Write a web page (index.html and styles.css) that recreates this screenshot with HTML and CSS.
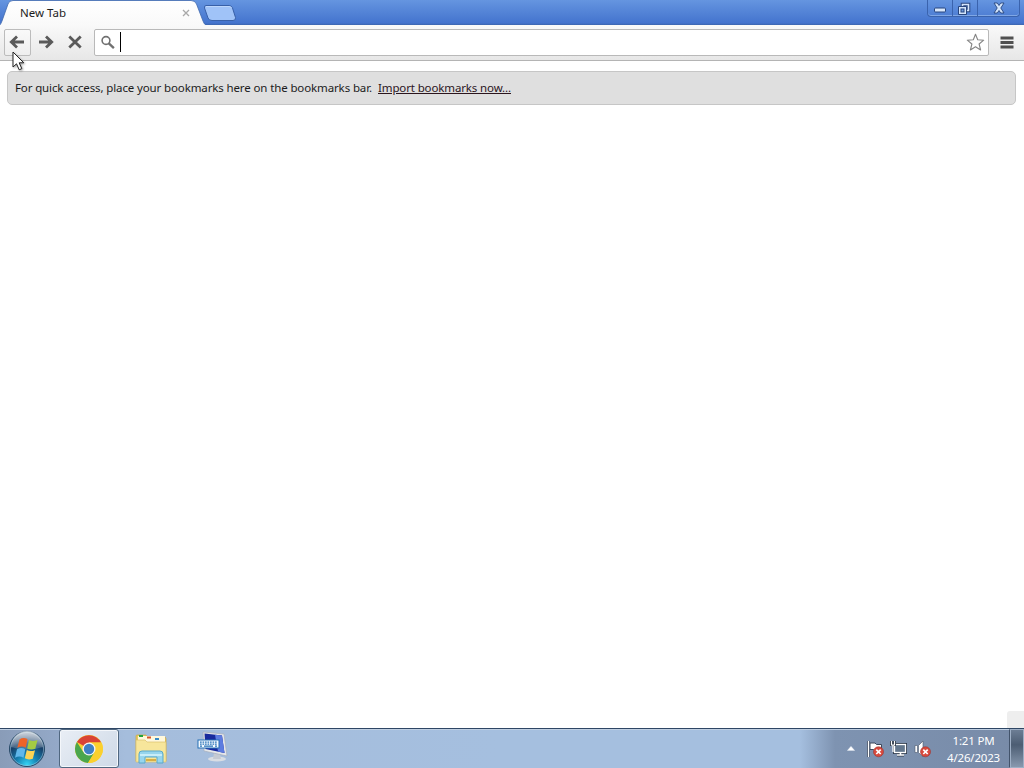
FILE: index.html
```html
<!DOCTYPE html>
<html lang="en">
<head>
    <meta charset="UTF-8">
    <meta name="viewport" content="width=device-width, initial-scale=1.0">
    <title>New Tab</title>
    <link rel="stylesheet" href="styles.css">
</head>
<body>
    <header class="titlebar">
        <div class="tab">
            <svg class="tab-shape" width="208" height="25" viewBox="0 0 208 25">
                <defs>
                    <linearGradient id="tabFill" x1="0" y1="0" x2="0" y2="1">
                        <stop offset="0" stop-color="#fff"/>
                        <stop offset="1" stop-color="#f9f9f9"/>
                    </linearGradient>
                </defs>
                <path d="M0 26 Q2 24 3 21 L9 4 Q10 .5 14 .5 H192 Q196 .5 197.500 4 L204 21 Q205 24.500 208 26 Z" fill="url(#tabFill)" stroke="#3f68ad" stroke-width=".8"/>
            </svg>
            <span class="tab-title">New Tab</span>
            <svg class="tab-close" width="8" height="8" viewBox="0 0 8 8"><path d="M1 1L7 7M7 1L1 7" stroke="#a9a9a9" stroke-width="1.300"/></svg>
        </div>
        <svg class="new-tab" width="34" height="17" viewBox="0 0 34 17">
            <path d="M3 .5 H26 Q28.500 .5 29.500 3 L32.500 12.500 Q33 15.500 30 15.500 H9 Q6 15.500 5 13 L1.500 3 Q1 .5 3 .5 Z" fill="#a0c3f8" stroke="#3860a8"/>
            <path d="M3 1.500 H26 Q28 1.500 28.500 3" fill="none" stroke="#bdd6fb"/>
        </svg>
        <div class="window-buttons">
            <button class="win-btn minimize" aria-label="Minimize">
                <svg width="12" height="6" viewBox="0 0 12 6"><rect x=".5" y="1" width="11" height="4" rx="1" fill="#d9e8fb" stroke="#27457e"/></svg>
            </button>
            <button class="win-btn restore" aria-label="Restore">
                <svg width="14" height="14" viewBox="0 0 14 14">
                    <path d="M5.500 2.500H11.500V8.500H5.500Z" fill="none" stroke="#27457e" stroke-width="3.600"/>
                    <path d="M5.500 2.500H11.500V8.500H5.500Z" fill="none" stroke="#d3e4fa" stroke-width="1.600"/>
                    <path d="M1.500 4.500H9.500V12.500H1.500Z" fill="#d3e4fa" stroke="#27457e"/>
                    <rect x="4" y="7" width="3" height="3" fill="#6f9ade" stroke="#27457e"/>
                </svg>
            </button>
            <button class="win-btn close" aria-label="Close">
                <svg width="12" height="12" viewBox="0 0 12 12">
                    <path d="M1 1H4.300L6 3.500 7.700 1H11L7.800 6 11 11H7.700L6 8.500 4.300 11H1L4.200 6Z" fill="#d3e4fa" stroke="#27457e" stroke-width=".9"/>
                </svg>
            </button>
        </div>
    </header>

    <nav class="toolbar">
        <button class="tool-btn back" aria-label="Back">
            <svg width="16" height="14" viewBox="0 0 16 14"><path d="M15 7H2.500M8 1.500L2.300 7L8 12.500" fill="none" stroke="#5a5a5a" stroke-width="2.800"/></svg>
        </button>
        <button class="tool-btn" aria-label="Forward">
            <svg width="16" height="14" viewBox="0 0 16 14"><path d="M1 7H13.500M8 1.500L13.700 7L8 12.500" fill="none" stroke="#5a5a5a" stroke-width="2.800"/></svg>
        </button>
        <button class="tool-btn" aria-label="Stop">
            <svg width="14" height="14" viewBox="0 0 14 14"><path d="M1.300 1.500L12.700 12.500M12.700 1.500L1.300 12.500" stroke="#5a5a5a" stroke-width="2.800"/></svg>
        </button>
        <div class="omnibox">
            <svg width="14" height="14" viewBox="0 0 14 14">
                <circle cx="5" cy="5.500" r="3.900" fill="none" stroke="#707070" stroke-width="1.600"/>
                <path d="M7.800 8.300L12.900 13.200" stroke="#707070" stroke-width="2.300"/>
            </svg>
            <span class="caret"></span>
            <svg class="star" width="19" height="19" viewBox="0 0 19 19">
                <path d="M9.500 1.200L11.700 6.800 17.700 7.200 13.100 11 14.600 17 9.500 13.800 4.400 17 5.900 11 1.300 7.200 7.300 6.800Z" fill="#fff" stroke="#858585" stroke-width="1.100" stroke-linejoin="round"/>
            </svg>
        </div>
        <button class="menu-btn" aria-label="Menu">
            <svg width="14" height="13" viewBox="0 0 14 13"><path d="M.5 2H13.500M.5 6.500H13.500M.5 11H13.500" stroke="#505050" stroke-width="2.800"/></svg>
        </button>
    </nav>

    <main class="page">
        <div class="bookmark-bar">
            <span class="hint">For quick access, place your bookmarks here on the bookmarks bar.</span>
            <a class="import" href="#">Import bookmarks now...</a>
        </div>
        <div class="corner"></div>
    </main>

    <footer class="taskbar">
        <div class="start">
            <svg width="38" height="38" viewBox="0 0 38 38">
                <defs>
                    <radialGradient id="orb" cx=".5" cy=".95" r=".9">
                        <stop offset="0" stop-color="#35d5f5"/>
                        <stop offset=".35" stop-color="#157fb0"/>
                        <stop offset=".7" stop-color="#173f68"/>
                        <stop offset="1" stop-color="#71849c"/>
                    </radialGradient>
                    <linearGradient id="shine" x1="0" y1="0" x2="0" y2="1">
                        <stop offset="0" stop-color="#fff" stop-opacity=".65"/>
                        <stop offset="1" stop-color="#fff" stop-opacity=".15"/>
                    </linearGradient>
                </defs>
                <circle cx="19" cy="19" r="17.500" fill="url(#orb)" stroke="#244765"/>
                <circle cx="19" cy="19" r="16.600" fill="none" stroke="#9fc5dc" stroke-width=".7" opacity=".8"/>
                <path d="M3 17A16 16 0 0 1 35 17Q19 22 3 17Z" fill="url(#shine)"/>
                <path d="M11.500 9.500Q15 7 19.500 9L17.800 17.700Q14 15.500 9.300 17.700Z" fill="#ed6428"/>
                <path d="M21 10Q25 12 29.500 10L27.300 18.700Q23 20.500 19.200 18.400Z" fill="#a3cb43"/>
                <path d="M9 19.200Q13.500 17 17.300 19.300L15.500 27.700Q11.500 25.500 7 27.700Z" fill="#60b7ea"/>
                <path d="M18.800 20Q22.500 22 27 20.200L24.800 28.700Q20.500 30.300 16.800 28.300Z" fill="#fcd354"/>
            </svg>
        </div>
        <div class="task active">
            <svg width="30" height="30" viewBox="0 0 30 30">
                <circle cx="15" cy="15" r="14" fill="#fbd02e"/>
                <path d="M15 15L2.900 8A14 14 0 0 1 27.100 8.500H15Z" fill="#d94335"/>
                <path d="M2.900 8A14 14 0 0 0 14 29L20.600 18.300L9.400 18.200Z" fill="#4aa64d"/>
                <path d="M15 8.500H27.100A14 14 0 0 1 14 29L20.600 18.300Z" fill="#fbd02e"/>
                <circle cx="15" cy="15" r="6.500" fill="#f4f4f4"/>
                <circle cx="15" cy="15" r="5.200" fill="#3f80c4"/>
            </svg>
        </div>
        <div class="task">
            <svg width="32" height="30" viewBox="0 0 32 30">
                <path d="M1 4V2Q1 1 2 1H11L12 3H29Q31 3 31 5V27H1Z" fill="#e8c960" stroke="#c9a74c" stroke-width=".7"/>
                <rect x="3" y="2" width="27" height="6" fill="#fff8dc"/>
                <path d="M4 2H8" stroke="#23a33c" stroke-width="2"/>
                <path d="M12 3.500H16" stroke="#d7542d" stroke-width="2"/>
                <path d="M20 5H24" stroke="#398bc6" stroke-width="2"/>
                <path d="M1 6H10L12 8H31V28H1Z" fill="#f7e69b" stroke="#dac06b" stroke-width=".7"/>
                <path d="M4 29V20Q4 17 7 17H25Q28 17 28 20V29H22V23H10V29Z" fill="#97d5ed" stroke="#5aa9cb"/>
                <path d="M5 21H27" stroke="#d9f4fb" stroke-width="1.500"/>
                <path d="M11 26H21" stroke="#d8af45" stroke-width="2"/>
            </svg>
        </div>
        <div class="task">
            <svg width="32" height="36" viewBox="0 0 32 36">
                <ellipse cx="20" cy="28" rx="9" ry="2.500" fill="#d9dde3"/>
                <path d="M17 22L23 23L24 28H16Z" fill="#c5cad3"/>
                <path d="M6 1L27 3L30 25L7 20Z" fill="#e4e6e9" stroke="#a5aebc" stroke-width=".7"/>
                <path d="M7.500 2.500L25 4.500L27.500 22L8.500 18Z" fill="#192a9d"/>
                <path d="M18 3.700L25 4.500L27.500 22L21 20.500Z" fill="#5d7ce0"/>
                <rect x="1" y="9" width="21" height="8" fill="#f4faff" stroke="#2670b5"/>
                <path d="M3 11.200H20M3 13.200H20" stroke="#2873b8" stroke-width="1.200" stroke-dasharray="1.700 .8"/>
                <path d="M3 15.200H5M7 15.200H16M18 15.200H20" stroke="#2873b8" stroke-width="1.200"/>
            </svg>
        </div>
        <div class="tray">
            <svg class="arrow" width="8" height="5" viewBox="0 0 8 5"><path d="M4 .3L7.700 4.500H.3Z" fill="#fff" stroke="#e1e8f3" stroke-width=".4"/></svg>
            <svg class="flag" width="18" height="18" viewBox="0 0 18 18">
                <path d="M1.500 1V17" stroke="#36445a" stroke-width="3"/>
                <path d="M3 3H8L9.500 4.500H14.500V11H8L6.500 9.500H3Z" fill="#fff" stroke="#3c495d"/>
                <path d="M1.500 1V17" stroke="#fff" stroke-width="1.400"/>
                <circle cx="11.500" cy="11.800" r="5" fill="#d84a3e" stroke="#9f302c" stroke-width=".6"/>
                <path d="M9.300 9.600L13.700 14M13.700 9.600L9.300 14" stroke="#fff" stroke-width="1.700"/>
            </svg>
            <svg class="network" width="17" height="17" viewBox="0 0 17 17">
                <rect x="4.500" y="4.500" width="11" height="8" fill="#63778d" stroke="#2d3949" stroke-width="3"/>
                <path d="M7 15H14" stroke="#2d3949" stroke-width="3"/>
                <rect x="4.500" y="4.500" width="11" height="8" fill="#63778d" stroke="#fff" stroke-width="1.300"/>
                <path d="M7 15H14M10.500 12.500V15" stroke="#fff" stroke-width="1.500"/>
                <rect x=".5" y="1.500" width="5" height="4" fill="#2d3949" stroke="#2d3949"/>
                <path d="M1.500 1V5H4.500V1M3 5V12" fill="none" stroke="#fff" stroke-width="1.200"/>
            </svg>
            <svg class="sound" width="18" height="18" viewBox="0 0 18 18">
                <path d="M1 5.500H3.500V12.500H1ZM4.500 5.500L9 1V17L4.500 12.500Z" fill="#fff" stroke="#4b586b" stroke-width=".6"/>
                <circle cx="11.500" cy="11.800" r="5" fill="#d84a3e" stroke="#9f302c" stroke-width=".6"/>
                <path d="M9.300 9.600L13.700 14M13.700 9.600L9.300 14" stroke="#fff" stroke-width="1.700"/>
            </svg>
            <div class="clock">
                <span class="time">1:21 PM</span>
                <span class="date">4/26/2023</span>
            </div>
            <div class="show-desktop"></div>
        </div>
    </footer>

    <svg class="cursor" width="14" height="21" viewBox="0 0 14 21">
        <path d="M1 1V16L4.500 12.800L7.200 18.800L9.800 17.600L7.200 11.800H11.800Z" fill="#fff" stroke="#222" stroke-width="1"/>
    </svg>
</body>
</html>
```
FILE: styles.css
```css
* {
    box-sizing: border-box;
}
body {
    font-family: "Noto Sans", "Open Sans", sans-serif;
    font-size: 12px;
    margin: 0;
    height: 768px;
    display: flex;
    flex-direction: column;
    overflow: hidden;
    background-color: #fff;
    color: #1c1c1c;
}
button {
    border: none;
    background: none;
    padding: 0;
    margin: 0;
    display: flex;
    align-items: center;
    justify-content: center;
}
svg {
    display: block;
    flex: none;
}

/* title bar */
.titlebar {
    height: 25px;
    display: flex;
    align-items: flex-start;
    background: linear-gradient(#6595e0, #4474ce 92%, #3b65ad);
}
.tab {
    position: relative;
    width: 203px;
    height: 25px;
    display: flex;
    align-items: center;
    justify-content: space-between;
    padding: 0 17px 0 20px;
}
.tab-shape {
    position: absolute;
    left: -1px;
    top: 0;
}
.tab-title {
    position: relative;
    font-size: 11.5px;
    line-height: 25px;
}
.tab-close {
    position: relative;
    margin-right: -4px;
}
.new-tab {
    margin-top: 5px;
}
.window-buttons {
    display: flex;
    margin-left: auto;
    margin-right: 4px;
    height: 17px;
    border: 1px solid #3a63ad;
    border-top: none;
    border-radius: 0 0 4px 4px;
    box-shadow: inset 0 -1px 0 #80a7e5;
}
.win-btn {
    height: 16px;
    width: 25px;
}
.win-btn + .win-btn {
    border-left: 1px solid #3a63ad;
}
.minimize {
    width: 24px;
    padding-top: 4px;
}
.restore {
    padding-top: 1px;
    padding-right: 2px;
}
.win-btn.close {
    width: 42px;
}

/* toolbar */
.toolbar {
    height: 36px;
    display: flex;
    align-items: center;
    padding: 0 3px 1px 4px;
    background: linear-gradient(#f9f9f9, #e7e7e7);
    border-bottom: 1px solid #b4b4b4;
}
.tool-btn {
    width: 27px;
    height: 27px;
    margin-right: 2px;
    padding-right: 1px;
}
.tool-btn.back {
    border: 1px solid #bcbcbc;
    border-radius: 2px;
    background: linear-gradient(#fafafa, #eee);
}
.omnibox {
    flex: 1;
    height: 27px;
    margin-left: 3px;
    display: flex;
    align-items: center;
    padding: 0 3px 0 6px;
    background-color: #fff;
    border: 1px solid #b9b9b9;
    border-radius: 2px;
}
.caret {
    width: 1px;
    height: 20px;
    margin-left: 5px;
    background-color: #000;
}
.star {
    margin-left: auto;
}
.menu-btn {
    width: 28px;
    height: 27px;
    margin-left: 4px;
}

/* page */
.page {
    flex: 1;
    display: flex;
    flex-direction: column;
    justify-content: space-between;
    padding: 10px 8px 0 7px;
}
.bookmark-bar {
    height: 34px;
    display: flex;
    align-items: center;
    padding: 0 7px 1px;
    background-color: #dfdfdf;
    border: 1px solid #c6c6c6;
    border-radius: 5px;
}
.hint {
    width: 357px;
    font-size: 11.5px;
    letter-spacing: -0.125px;
    white-space: nowrap;
}
.import {
    margin-left: 6px;
    font-size: 11.5px;
    letter-spacing: -0.13px;
    color: #2b151d;
    white-space: nowrap;
}
.corner {
    align-self: flex-end;
    width: 17px;
    height: 17px;
    margin-right: -8px;
    background-color: #eee;
    border-radius: 3px 0 0 0;
}

/* taskbar */
.taskbar {
    height: 40px;
    display: flex;
    align-items: center;
    border-top: 1px solid #2e4664;
    box-shadow: inset 0 1px 0 #bfcfe2;
    background: linear-gradient(90deg, #899cb8 0, #94a9c8 58px, #a5bddc 125px, #a5bfdf 500px, #a5bfdf 800px, #7e93b1 835px, #788ba8 1024px);
}
.start {
    padding-left: 8px;
    width: 59px;
}
.task {
    width: 60px;
    height: 39px;
    margin-right: 2px;
    display: flex;
    align-items: center;
    justify-content: center;
}
.task.active {
    border: 1px solid #506780;
    border-radius: 3px;
    background: linear-gradient(135deg, #e9eef5, #ced9e7);
    box-shadow: inset 0 0 0 1px #f4f7fb;
}
.tray {
    margin-left: auto;
    height: 39px;
    display: flex;
    align-items: center;
}
.flag {
    margin-left: 12px;
}
.network {
    margin-left: 5px;
}
.sound {
    margin-left: 7px;
}
.clock {
    width: 77px;
    padding-left: 6px;
    display: flex;
    flex-direction: column;
    align-items: center;
    font-size: 11.5px;
    letter-spacing: -0.2px;
    line-height: 17px;
    color: #fff;
}
.show-desktop {
    width: 15px;
    height: 39px;
    border: 1px solid #9eafc5;
    border-left-color: #42536b;
    box-shadow: inset 1px 0 0 #9eafc5;
    background: linear-gradient(#6c7d94, #4c5d73 40%, #8798ae);
}

.cursor {
    position: absolute;
    left: 12px;
    top: 51px;
    filter: drop-shadow(1px 1px 1px rgba(0, 0, 0, 0.35));
}
```
